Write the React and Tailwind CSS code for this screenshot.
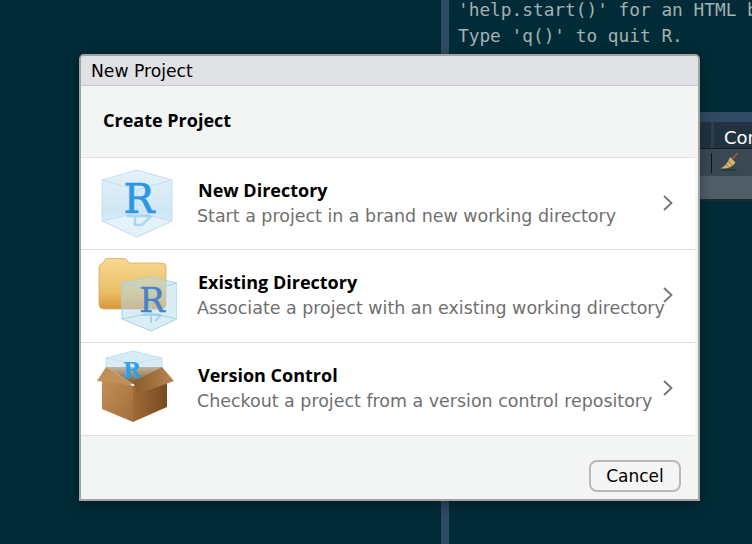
import React from 'react';

const serif = "'DejaVu Serif', serif";

const CubeR = () => (
  <svg width="80" height="76" viewBox="0 0 80 76">
    <defs>
      <linearGradient id="cubeFill" x1="0" y1="0" x2="0" y2="1">
        <stop offset="0" stopColor="#e4f2fa" />
        <stop offset="0.6" stopColor="#cfe6f4" />
        <stop offset="1" stopColor="#e6f3fa" />
      </linearGradient>
    </defs>
    <path d="M40 4 L75 14 V55 L40 71 L5 55 V14 Z" fill="url(#cubeFill)" stroke="#c4e0f0" strokeWidth="1" />
    <path d="M5 14 L40 24 L75 14 M40 24 V47" fill="none" stroke="#c4e0f0" strokeWidth="1" />
    <path d="M5 55 L40 47 L75 55 L40 71 Z" fill="#e4f2fa" stroke="#c4e0f0" strokeWidth="1" />
    <text x="42" y="47" textAnchor="middle" fontFamily={serif} fontSize="41" stroke="#2b97e6" strokeWidth="0.7" fill="#2b97e6">R</text>
    <path d="M30 50 H54 M38 50 V60 M54 50 L45 59 H38" fill="none" stroke="#2b97e6" strokeOpacity="0.3" strokeWidth="2.5" />
  </svg>
);

const FolderCube = () => (
  <svg width="80" height="76" viewBox="0 0 80 76">
    <defs>
      <linearGradient id="folderFill" x1="0" y1="0" x2="0" y2="1">
        <stop offset="0" stopColor="#f6d992" />
        <stop offset="0.65" stopColor="#ecbf68" />
        <stop offset="1" stopColor="#d8963a" />
      </linearGradient>
    </defs>
    <path d="M2 10 Q2 6 6 5 L8 1.5 Q9 0.5 11 0.5 H27 Q29 0.5 30 2 L32 5 H65 Q69 5 69 9 V46 Q69 51 64 51 H7 Q2 51 2 46 Z" fill="url(#folderFill)" stroke="#cfab69" strokeWidth="0.8" />
    <path d="M25 25 L54 19 L80 25 V61 L54 73 L25 61 Z" fill="#b4dbec" fillOpacity="0.5" stroke="#a5d2e7" strokeWidth="1" />
    <path d="M25 25 L54 32 L80 25 M54 32 V55" fill="none" stroke="#a5d2e7" strokeWidth="1" />
    <path d="M25 61 L54 55 L80 61" fill="none" stroke="#a5d2e7" strokeWidth="1" />
    <text x="55" y="54" textAnchor="middle" fontFamily={serif} fontSize="34" stroke="#4a82c8" strokeWidth="0.5" fill="#4a82c8">R</text>
    <path d="M46 57 H64 M54 57 V65 M64 57 L58 63" fill="none" stroke="#46a6e6" strokeOpacity="0.35" strokeWidth="2" />
  </svg>
);

const BoxCube = () => (
  <svg width="80" height="82" viewBox="0 0 80 82">
    <defs>
      <linearGradient id="boxLeft" x1="0" y1="0" x2="1" y2="1">
        <stop offset="0" stopColor="#c58f58" />
        <stop offset="1" stopColor="#a26e3a" />
      </linearGradient>
      <linearGradient id="boxRight" x1="0" y1="0" x2="1" y2="0">
        <stop offset="0" stopColor="#a06a36" />
        <stop offset="1" stopColor="#764b23" />
      </linearGradient>
      <linearGradient id="boxInner" x1="0" y1="0" x2="0" y2="1">
        <stop offset="0" stopColor="#c2b49c" />
        <stop offset="1" stopColor="#7a5a34" />
      </linearGradient>
      <linearGradient id="flapRight" x1="0" y1="0" x2="1" y2="0">
        <stop offset="0" stopColor="#8a5a2c" />
        <stop offset="1" stopColor="#b98650" />
      </linearGradient>
    </defs>
    <path d="M9 10 L36 3 L65 10 V24 H9 Z" fill="#d7ecf6" stroke="#c4e0f0" strokeWidth="1" />
    <path d="M9 10 L36 16 L65 10" fill="none" stroke="#c4e0f0" strokeWidth="1" />
    <path d="M9 19 L65 19 L36 36 Z" fill="url(#boxInner)" />
    <text x="35" y="30" textAnchor="middle" fontFamily={serif} fontWeight="bold" fontSize="22" fill="#29a3f0">R</text>
    <path d="M5 27 L36 38 V74 L5 61 Z" fill="url(#boxLeft)" />
    <path d="M36 38 L70 28 V59 L36 74 Z" fill="url(#boxRight)" />
    <path d="M9 19 L36 36 L32 37 L0 33 Z" fill="#c0905a" />
    <path d="M36 34 L65 19 L77 33 L41 46 Z" fill="url(#flapRight)" />
  </svg>
);

const Broom = () => (
  <svg width="18" height="20" viewBox="0 0 18 20">
    <path d="M10 7 L17 0" stroke="#a8583c" strokeWidth="1.6" />
    <path d="M9 4 L14.5 9.5 Q11 16 0 15.5 Q6 12 9 4 Z" fill="#d3b46e" />
    <path d="M7 8 L12 13 M5 11 L8 14.5" stroke="#8d6b34" strokeWidth="0.8" />
    <ellipse cx="8" cy="17" rx="8" ry="1" fill="#00000040" />
  </svg>
);

const Chevron = () => (
  <svg width="12" height="18" viewBox="0 0 12 18" className="shrink-0">
    <path d="M2 2 L9.5 9 L2 16" fill="none" stroke="#737373" strokeWidth="1.8" />
  </svg>
);

const rows = [
  { title: 'New Directory', text: 'Start a project in a brand new working directory', icon: <CubeR />, h: 'h-[92px]' },
  { title: 'Existing Directory', text: 'Associate a project with an existing working directory', icon: <FolderCube />, h: 'h-[93px]' },
  { title: 'Version Control', text: 'Checkout a project from a version control repository', icon: <BoxCube />, h: 'h-[93px]' },
];

export default function App() {
  return (
    <div className="relative flex h-[544px] w-[752px] overflow-hidden bg-[#022b38] font-['DejaVu_Sans',sans-serif]">
      {/* ide behind the dialog */}
      <div className="w-[441px] shrink-0" />
      <div className="w-[8px] shrink-0 bg-[#2f4a62]" />
      <div className="flex min-w-0 flex-1 flex-col">
        <div className="h-[112px] shrink-0 overflow-hidden whitespace-pre px-[9px] font-['DejaVu_Sans_Mono',monospace] text-[17.8px] leading-[26px] text-[#a3b1b1]">
          <div className="-mt-[3px]">'help.start()' for an HTML browser</div>
          <div>Type 'q()' to quit R.</div>
        </div>
        <div className="h-[10px] shrink-0 bg-[#2f4a62]" />
        <div className="flex h-[26px] shrink-0 gap-[3px] overflow-hidden bg-[#2c4052] pl-[250px]">
          <div className="w-[12px] shrink-0 bg-[#22333f]" />
          <div className="w-[80px] shrink-0 bg-[#22333f] pl-[10px] pt-[4px] text-[18px] leading-[24px] text-white">Console</div>
        </div>
        <div className="flex h-[28px] shrink-0 items-center gap-[9px] border-t border-[#111d24] bg-[#3a4853] pl-[262px]">
          <div className="h-[20px] w-px bg-[#0c1418]" />
          <Broom />
        </div>
        <div className="h-[25px] shrink-0 border-b-2 border-[#1d2b33] bg-[#505d67]" />
        <div className="flex-1" />
      </div>

      {/* dialog */}
      <div className="absolute left-[79px] top-[54px] flex h-[447px] w-[621px] flex-col overflow-hidden rounded-t-[5px] border-2 border-[#a3a3a3] bg-[#f3f4f4] shadow-[0_4px_14px_rgba(0,0,0,0.35)]">
        <div className="h-[30px] shrink-0 border-b border-[#c9c9cb] bg-[#e0e1e5] pl-[10px] text-[17.2px] leading-[30px] text-black">New Project</div>
        <div className="flex h-[72px] shrink-0 items-center border-b border-[#e3e3e3] pb-[3px] pl-[22px] font-['Open_Sans',sans-serif] text-[18px] font-bold text-black">Create Project</div>
        <div className="mr-[3px] shrink-0 bg-white">
          {rows.map((row) => (
            <div key={row.title} className={`relative flex items-center border-b border-[#dedede] ${row.h}`}>
              <div className="flex w-[116px] shrink-0 justify-center pr-[4px]">{row.icon}</div>
              <div className="min-w-0 flex-1 whitespace-nowrap">
                <div className="pl-px font-['Open_Sans',sans-serif] text-[18px] font-bold leading-[20px] text-black">{row.title}</div>
                <div className="mt-[4px] text-[17.45px] leading-[24px] text-[#6f6f6f]">{row.text}</div>
              </div>
              <div className="absolute right-[21px] top-[calc(50%-1px)] -translate-y-1/2"><Chevron /></div>
            </div>
          ))}
        </div>
        <div className="flex flex-1 justify-end pr-[17px] pt-[24px]">
          <button className="h-[32px] w-[92px] rounded-[8px] border-2 border-[#b9b9b9] bg-[#f5f5f6] pt-[1px] text-[17px] text-black">Cancel</button>
        </div>
      </div>
    </div>
  );
}
